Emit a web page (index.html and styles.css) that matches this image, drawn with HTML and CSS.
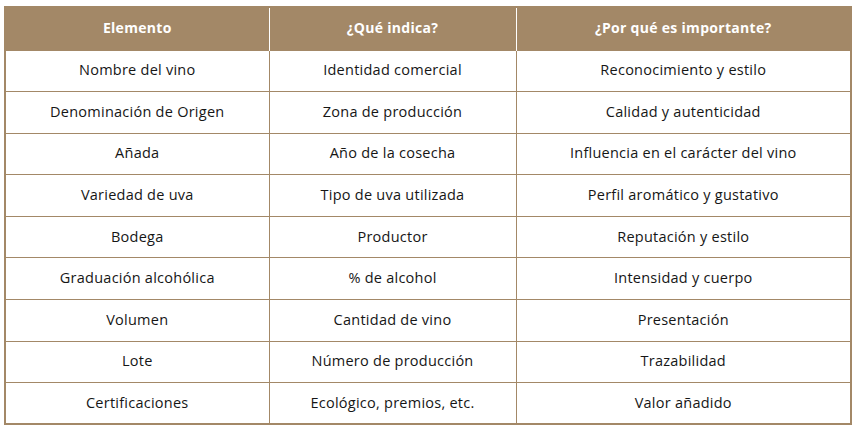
FILE: index.html
```html
<!DOCTYPE html>
<html lang="es">
<head>
<meta charset="utf-8">
<link rel="stylesheet" href="styles.css">
</head>
<body>
<div class="wrap">
<table class="wine">
<colgroup><col class="c1"><col class="c2"><col class="c3"></colgroup>
<thead>
<tr><th>Elemento</th><th>¿Qué indica?</th><th>¿Por qué es importante?</th></tr>
</thead>
<tbody>
<tr><td>Nombre del vino</td><td>Identidad comercial</td><td>Reconocimiento y estilo</td></tr>
<tr><td>Denominación de Origen</td><td>Zona de producción</td><td>Calidad y autenticidad</td></tr>
<tr><td>Añada</td><td>Año de la cosecha</td><td>Influencia en el carácter del vino</td></tr>
<tr><td>Variedad de uva</td><td>Tipo de uva utilizada</td><td>Perfil aromático y gustativo</td></tr>
<tr><td>Bodega</td><td>Productor</td><td>Reputación y estilo</td></tr>
<tr><td>Graduación alcohólica</td><td>% de alcohol</td><td>Intensidad y cuerpo</td></tr>
<tr><td>Volumen</td><td>Cantidad de vino</td><td>Presentación</td></tr>
<tr><td>Lote</td><td>Número de producción</td><td>Trazabilidad</td></tr>
<tr><td>Certificaciones</td><td>Ecológico, premios, etc.</td><td>Valor añadido</td></tr>
</tbody>
</table>
</div>
</body>
</html>
```
FILE: styles.css
```css
html, body { margin: 0; padding: 0; background: #fff; }
.wrap { padding: 6px 9px 0 4px; }
.wine {
  width: 846px;
  border-collapse: collapse;
  table-layout: fixed;
  border: 2px solid #a38867;
  font-family: "Open Sans", "Liberation Sans", sans-serif;
  color: #161616;
}
.c1 { width: 264px; }
.c2 { width: 247px; }
.c3 { width: 335px; }
.wine th {
  background: #a38867;
  color: #fff;
  font-weight: 700;
  font-size: 14px;
  letter-spacing: 0.3px;
  height: 43px;
  padding: 0 0 2px;
  border-left: 1px solid #fff;
  box-sizing: border-box;
}
.wine th:first-child { border-left: none; }
.wine td {
  font-size: 14.5px;
  letter-spacing: 0.25px;
  text-align: center;
  height: 41.6px;
  padding: 0 0 2px;
  border: 1px solid #a38867;
  box-sizing: border-box;
}
```
